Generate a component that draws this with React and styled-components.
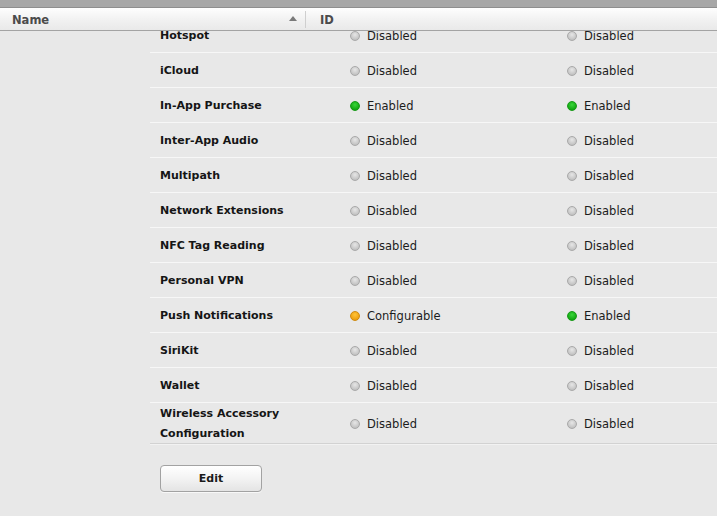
import React from "react";
import styled, { createGlobalStyle } from "styled-components";

const Global = createGlobalStyle`
  html, body { margin: 0; padding: 0; }
  body {
    background: #e8e8e8;
    font-family: "DejaVu Sans", "Liberation Sans", sans-serif;
    color: #111;
  }
`;

const Page = styled.div`
  width: 717px;
  height: 516px;
  display: flex;
  flex-direction: column;
  overflow: hidden;
  background: #e8e8e8;
`;

const TopBar = styled.div`
  height: 7px;
  flex: none;
  background: #a7a7a7;
  border-bottom: 1px solid #8e8e8e;
`;

const Header = styled.div`
  height: 22px;
  flex: none;
  display: grid;
  grid-template-columns: 306px 1fr;
  background: linear-gradient(#fefefe, #f1f1f1 55%, #e9e9e9);
  border-bottom: 1px solid #a3a3a3;
`;

const HeadCell = styled.div`
  display: flex;
  align-items: center;
  padding-left: ${(p) => p.$pad}px;
  padding-top: 2px;
  font-size: 11.5px;
  font-weight: bold;
  color: #4b4b4b;
`;

const HeadDivider = styled.span`
  align-self: center;
  width: 1px;
  height: 17px;
  margin-top: -2px;
  background: #cfcfcf;
`;

const SortArrow = styled.span`
  width: 0;
  height: 0;
  border-left: 4px solid transparent;
  border-right: 4px solid transparent;
  border-bottom: 5px solid #7a7a7a;
  margin-left: auto;
  margin-right: 8px;
  margin-top: -3px;
`;

const Viewport = styled.div`
  flex: 1;
  overflow: hidden;
`;

const List = styled.div`
  margin-top: -13px;
  margin-left: 150px;
  display: flex;
  flex-direction: column;
`;

const Row = styled.div`
  display: grid;
  grid-template-columns: 190px 217px 1fr;
  align-items: center;
  min-height: 32px;
  padding-top: 2px;
  padding-left: 10px;
  border-bottom: 1px solid ${(p) => (p.$last ? "#f2f2f2" : "#f7f7f7")};
  ${(p) => p.$last && "padding-top: 1px; box-shadow: inset 0 -2px 0 -1px #d2d2d2;"}
`;

const Name = styled.div`
  font-size: 11px;
  font-weight: bold;
  line-height: 20px;
  color: #151515;
`;

const Status = styled.div`
  display: flex;
  align-items: center;
  font-size: 11.5px;
  color: #1c1c1c;
  line-height: 20px;
`;

const dotColors = {
  Disabled: "radial-gradient(circle at 50% 35%, #e6e6e6, #c4c4c4 70%, #b3b3b3)",
  Enabled: "radial-gradient(circle at 50% 35%, #3ad63a, #14a814 70%, #0f8f0f)",
  Configurable: "radial-gradient(circle at 50% 35%, #ffc43a, #eea112 70%, #d88d0a)",
};

const dotBorders = {
  Disabled: "#a9a9a9",
  Enabled: "#169a16",
  Configurable: "#cf8a10",
};

const Dot = styled.span`
  width: 10px;
  height: 10px;
  box-sizing: border-box;
  border-radius: 50%;
  margin-right: 7px;
  flex: none;
  background: ${(p) => dotColors[p.$state]};
  border: 1px solid ${(p) => dotBorders[p.$state]};
`;

const Footer = styled.div`
  margin-left: 160px;
  padding-top: 20px;
`;

const Button = styled.button`
  width: 102px;
  height: 27px;
  border: 1px solid #a2a2a2;
  border-radius: 4px;
  background: linear-gradient(#ffffff, #f3f3f3 50%, #e4e4e4);
  box-shadow: 0 1px 0 rgba(255, 255, 255, 0.7);
  font-family: "DejaVu Sans", "Liberation Sans", sans-serif;
  font-size: 11px;
  font-weight: bold;
  color: #1a1a1a;
  padding: 0;
`;

const rows = [
  ["Hotspot", "Disabled", "Disabled"],
  ["iCloud", "Disabled", "Disabled"],
  ["In-App Purchase", "Enabled", "Enabled"],
  ["Inter-App Audio", "Disabled", "Disabled"],
  ["Multipath", "Disabled", "Disabled"],
  ["Network Extensions", "Disabled", "Disabled"],
  ["NFC Tag Reading", "Disabled", "Disabled"],
  ["Personal VPN", "Disabled", "Disabled"],
  ["Push Notifications", "Configurable", "Enabled"],
  ["SiriKit", "Disabled", "Disabled"],
  ["Wallet", "Disabled", "Disabled"],
  ["Wireless Accessory\nConfiguration", "Disabled", "Disabled"],
];

function StatusCell({ state }) {
  return (
    <Status>
      <Dot $state={state} />
      {state}
    </Status>
  );
}

export default function App() {
  return (
    <Page>
      <Global />
      <TopBar />
      <Header>
        <HeadCell $pad={12}>
          Name
          <SortArrow />
          <HeadDivider />
        </HeadCell>
        <HeadCell $pad={14}>ID</HeadCell>
      </Header>
      <Viewport>
        <List>
          {rows.map(([name, a, b], i) => (
            <Row key={name} $last={i === rows.length - 1}>
              <Name>
                {name.split("\n").map((l) => (
                  <div key={l}>{l}</div>
                ))}
              </Name>
              <StatusCell state={a} />
              <StatusCell state={b} />
            </Row>
          ))}
        </List>
        <Footer>
          <Button>Edit</Button>
        </Footer>
      </Viewport>
    </Page>
  );
}
